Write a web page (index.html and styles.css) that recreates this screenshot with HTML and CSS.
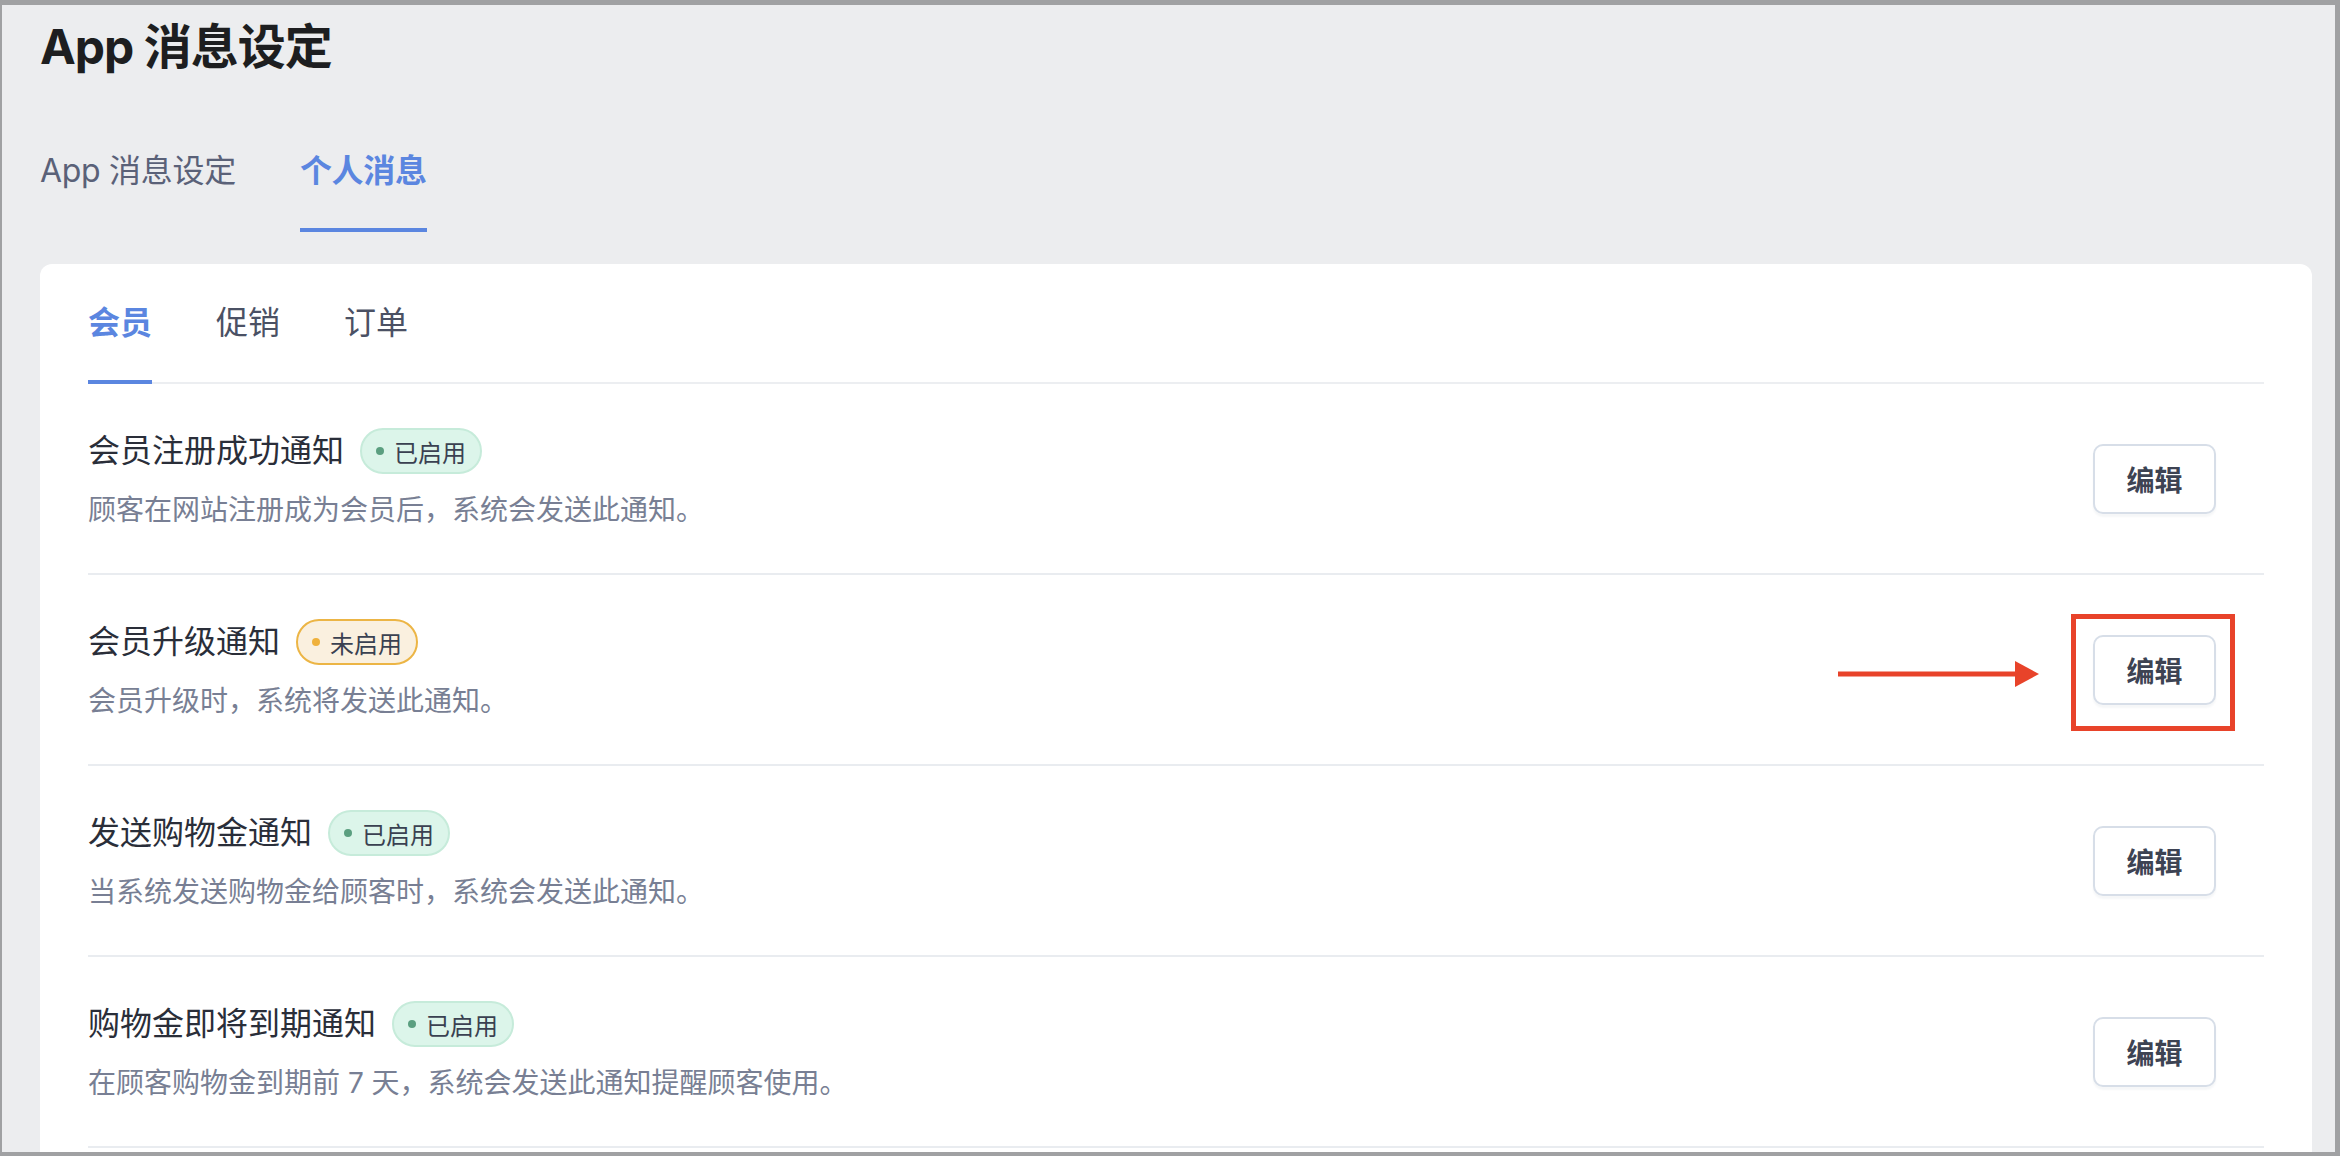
FILE: index.html
```html
<!DOCTYPE html>
<html lang="zh-CN">
<head>
<meta charset="utf-8">
<title>App 消息设定</title>
<link rel="stylesheet" href="styles.css">
</head>
<body>
<div class="frame">
  <h1 class="page-title">App 消息设定</h1>
  <nav class="top-tabs">
    <a class="top-tab">App 消息设定</a>
    <a class="top-tab active">个人消息</a>
  </nav>
  <section class="card">
    <nav class="sub-tabs">
      <a class="sub-tab active">会员</a>
      <a class="sub-tab">促销</a>
      <a class="sub-tab">订单</a>
    </nav>
    <ul class="notice-list">
      <li class="notice">
        <div class="notice-info">
          <div class="notice-head">
            <span class="notice-title">会员注册成功通知</span>
            <span class="badge badge-on"><i class="dot"></i>已启用</span>
          </div>
          <p class="notice-desc">顾客在网站注册成为会员后，系统会发送此通知。</p>
        </div>
        <button class="edit-btn">编辑</button>
      </li>
      <li class="notice">
        <div class="notice-info">
          <div class="notice-head">
            <span class="notice-title">会员升级通知</span>
            <span class="badge badge-off"><i class="dot"></i>未启用</span>
          </div>
          <p class="notice-desc">会员升级时，系统将发送此通知。</p>
        </div>
        <button class="edit-btn">编辑</button>
        <svg class="mark-arrow" width="201" height="26" viewBox="0 0 201 26"><line x1="0" y1="13" x2="180" y2="13" stroke="#e8432a" stroke-width="5"/><polygon points="177,0 201,13 177,26" fill="#e8432a"/></svg>
        <span class="mark-box"></span>
      </li>
      <li class="notice">
        <div class="notice-info">
          <div class="notice-head">
            <span class="notice-title">发送购物金通知</span>
            <span class="badge badge-on"><i class="dot"></i>已启用</span>
          </div>
          <p class="notice-desc">当系统发送购物金给顾客时，系统会发送此通知。</p>
        </div>
        <button class="edit-btn">编辑</button>
      </li>
      <li class="notice">
        <div class="notice-info">
          <div class="notice-head">
            <span class="notice-title">购物金即将到期通知</span>
            <span class="badge badge-on"><i class="dot"></i>已启用</span>
          </div>
          <p class="notice-desc">在顾客购物金到期前 7 天，系统会发送此通知提醒顾客使用。</p>
        </div>
        <button class="edit-btn">编辑</button>
      </li>
    </ul>
  </section>
</div>
</body>
</html>
```
FILE: styles.css
```css
html, body {
  margin: 0;
  height: 100%;
  overflow: hidden;
}
body {
  font-family: Inter, "Noto Sans CJK SC", sans-serif;
}
.frame {
  box-sizing: border-box;
  height: 100vh;
  display: flex;
  flex-direction: column;
  border-style: solid;
  border-color: #a0a1a3;
  border-width: 5px 5px 4px 2px;
  background: #ecedef;
  padding: 10px 23px 0 38px;
  overflow: hidden;
}
.page-title {
  margin: 0;
  font-size: 48px;
  line-height: 64px;
  font-weight: 700;
  letter-spacing: -1px;
  color: #1d1e20;
}
.top-tabs {
  display: flex;
  gap: 64px;
  margin-top: 70px;
}
.top-tab {
  font-size: 32px;
  line-height: 44px;
  letter-spacing: -0.3px;
  color: #5a6178;
  padding-bottom: 35px;
  border-bottom: 4px solid transparent;
}
.top-tab.active {
  color: #5b86e0;
  font-weight: 600;
  border-bottom-color: #5b86e0;
}
.card {
  flex: 1;
  margin-top: 32px;
  background: #ffffff;
  border-radius: 12px 12px 0 0;
  padding: 37px 48px 0;
}
.sub-tabs {
  display: flex;
  gap: 64px;
  border-bottom: 2px solid #eceef1;
}
.sub-tab {
  font-size: 32px;
  line-height: 44px;
  color: #4b5164;
  padding-bottom: 35px;
  border-bottom: 4px solid transparent;
  margin-bottom: -2px;
}
.sub-tab.active {
  color: #5b86e0;
  font-weight: 600;
  border-bottom-color: #5b86e0;
}
.notice-list {
  list-style: none;
  margin: 0;
  padding: 0;
}
.notice {
  position: relative;
  display: flex;
  align-items: center;
  justify-content: space-between;
  padding: 44px 48px 43px 0;
  border-bottom: 2px solid #e9ecf0;
}
.notice-head {
  display: flex;
  align-items: center;
  gap: 16px;
  height: 46px;
}
.notice-title {
  font-size: 32px;
  line-height: 46px;
  color: #2a2e39;
}
.badge {
  box-sizing: border-box;
  display: inline-flex;
  align-items: center;
  gap: 10px;
  height: 46px;
  padding: 0 14px;
  border: 2px solid;
  border-radius: 23px;
  font-size: 24px;
  color: #3a4151;
}
.badge .dot {
  width: 8px;
  height: 8px;
  border-radius: 50%;
}
.badge-on {
  background: #dcf5ea;
  border-color: #c6ebda;
}
.badge-on .dot {
  background: #5b9f80;
}
.badge-off {
  background: #faf0df;
  border-color: #ecb545;
}
.badge-off .dot {
  background: #efb13c;
}
.notice-desc {
  margin: 16px 0 0;
  font-size: 28px;
  line-height: 40px;
  color: #787f94;
}
.edit-btn {
  box-sizing: border-box;
  height: 70px;
  width: 123px;
  padding: 0;
  border: 2px solid #d7dee8;
  border-radius: 10px;
  background: #ffffff;
  box-shadow: 0 3px 2px rgba(30, 50, 80, 0.04);
  font-family: Inter, "Noto Sans CJK SC", sans-serif;
  font-size: 28px;
  font-weight: 700;
  color: #3d4353;
}
.mark-arrow {
  position: absolute;
  right: 225px;
  top: 86px;
}
.mark-box {
  position: absolute;
  right: 29px;
  top: 39px;
  width: 164px;
  height: 117px;
  box-sizing: border-box;
  border: 5px solid #e8432a;
}
```
